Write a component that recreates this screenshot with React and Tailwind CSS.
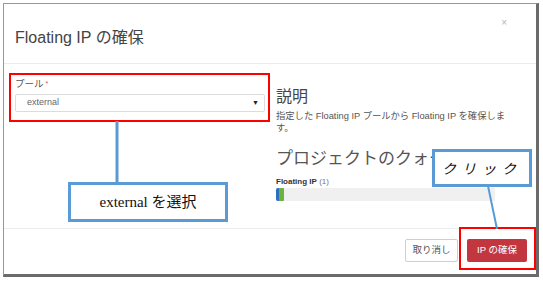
import React from "react";

export default function App() {
    return (
        <div className="w-[543px] h-[281px] bg-white pt-[3px] pl-[3px] font-['Liberation_Sans','Noto_Sans_CJK_JP',sans-serif]">
            <div className="relative w-[536px] h-[274px] bg-white border-t border-l border-t-[#6f9fd3] border-l-[#6f9fd3] border-r-[3px] border-b-[3px] border-r-[#6b6b6b] border-b-[#6b6b6b] flex flex-col">
                {/* Header */}
                <div className="h-[60px] border-b border-[#ececec] flex items-start justify-between pl-[11px] pr-[29px]">
                    <h4 className="mt-[24px] text-[16px] leading-[20px] text-[#444]">
                        Floating IP の確保
                    </h4>
                    <span className="mt-[13px] text-[10px] leading-[12px] text-[#b5b5b5]">
                        ×
                    </span>
                </div>

                {/* Body */}
                <div className="h-[165px] flex pl-[5px]">
                    <div className="pt-[9px]">
                        <div className="w-[261px] h-[49px] border-2 border-[#ff0000] px-[4px] pt-[3px]">
                            <label className="block text-[9.5px] leading-[12px] text-[#555]">
                                プール
                                <span className="text-[#d9534f] text-[7px] align-top ml-[2px]">*</span>
                            </label>
                            <div className="mt-[4px] w-[250px] h-[18px] border border-[#dcdcdc] rounded-[2px] flex items-center justify-between pl-[11px] pr-[5px]">
                                <span className="text-[9px] text-[#666]">external</span>
                                <span className="text-[7px] text-[#222]">▼</span>
                            </div>
                        </div>
                    </div>

                    <div className="ml-[6px] pt-[23px] w-[250px]">
                        <h3 className="text-[16px] leading-[20px] text-[#444]">説明</h3>
                        <p className="mt-[3px] w-[236px] text-[9.3px] leading-[12px] text-[#555]">
                            指定した Floating IP プールから Floating IP を確保します。
                        </p>
                        <h3 className="mt-[15px] text-[17px] leading-[20px] text-[#555] whitespace-nowrap">
                            プロジェクトのクォータ
                        </h3>
                        <div className="mt-[8px] text-[8px] leading-[10px] text-[#333]">
                            <span className="font-bold">Floating IP</span>{" "}
                            <span className="text-[#777]">(1)</span>
                        </div>
                        <div className="mt-[1px] w-[219px] h-[13px] bg-[#f0f0f0] flex">
                            <div className="w-[3px] h-full bg-[#2c6fc0] rounded-l-[2px]"></div>
                            <div className="w-[5px] h-full bg-[#6cb33e] rounded-r-[1px]"></div>
                        </div>
                    </div>
                </div>

                {/* Footer */}
                <div className="flex-1 border-t border-[#ececec] flex items-start justify-end gap-[1px] -mt-[1px]">
                    <button className="mt-[10px] w-[53px] h-[23px] border border-[#cfcfcf] rounded-[2px] bg-white text-[9.5px] text-[#555]">
                        取り消し
                    </button>
                    <div className="-mt-[2px] w-[77px] h-[43px] border-2 border-[#ff0000] flex items-start pl-[6px] pt-[10px]">
                        <button className="w-[60px] h-[23px] rounded-[2px] bg-[#c2373f] text-[9.5px] text-white">
                            IP の確保
                        </button>
                    </div>
                </div>

                {/* Annotation connectors */}
                <svg className="absolute left-0 top-0 pointer-events-none" width="536" height="274">
                    <line x1="113" y1="117" x2="113" y2="180" stroke="#5b9bd5" strokeWidth="3" />
                    <line x1="484" y1="182" x2="493" y2="225" stroke="#5b9bd5" strokeWidth="2" />
                </svg>

                {/* Callouts */}
                <div className="absolute left-[64px] top-[178px] w-[160px] h-[40px] border-[3px] border-[#5b9bd5] bg-white flex items-center justify-center">
                    <span className="text-[15px] text-[#111] font-['Liberation_Serif','Noto_Sans_CJK_JP',serif]">
                        external を選択
                    </span>
                </div>
                <div className="absolute left-[428px] top-[145px] w-[100px] h-[38px] border-[3px] border-[#5b9bd5] bg-white flex items-center justify-center">
                    <span className="text-[14px] tracking-[6px] text-[#111] font-['Noto_Sans_CJK_JP',serif] italic">
                        クリック
                    </span>
                </div>
            </div>
        </div>
    );
}
